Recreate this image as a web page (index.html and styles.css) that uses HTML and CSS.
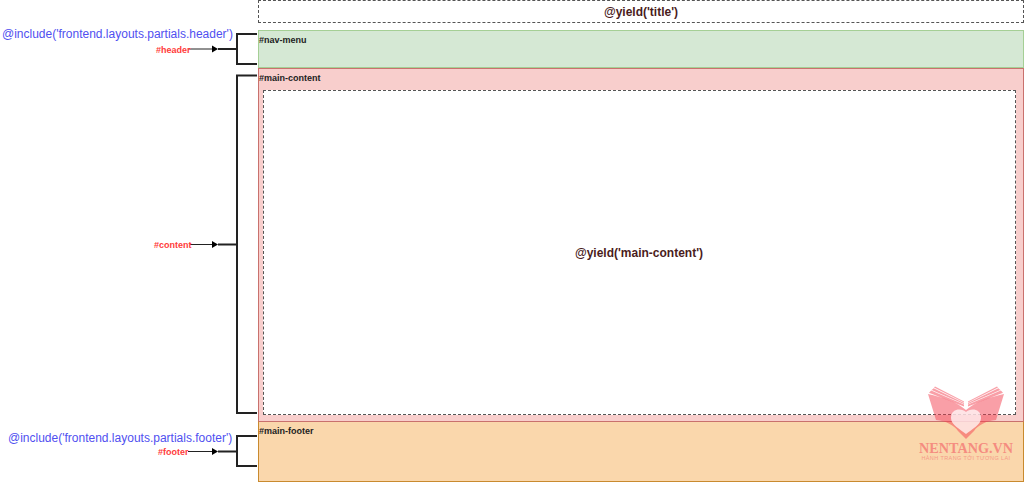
FILE: index.html
```html
<!DOCTYPE html>
<html lang="en">
<head>
<meta charset="utf-8">
<title>Layout diagram</title>
<link rel="stylesheet" href="styles.css">
</head>
<body>
<div class="canvas">
  <svg class="wires" width="1024" height="482" viewBox="0 0 1024 482">
    <g class="bracket">
      <path d="M257 34H237V64H257"/>
      <path d="M257 75.500H237V413H257"/>
      <path d="M257 436H237V466H257"/>
      <path d="M237 49H218M237 244.500H218M237 451.500H218"/>
    </g>
    <g class="thin">
      <path d="M188 49H212M190 244.500H212M188 451.500H212"/>
    </g>
    <g class="head">
      <path d="M212 45.500L218 49L212 52.500Z"/>
      <path d="M212 241L218 244.500L212 248Z"/>
      <path d="M212 448L218 451.500L212 455Z"/>
    </g>
  </svg>

  <span class="include include-header">@include('frontend.layouts.partials.header')</span>
  <span class="tag tag-header">#header</span>
  <span class="tag tag-content">#content</span>
  <span class="include include-footer">@include('frontend.layouts.partials.footer')</span>
  <span class="tag tag-footer">#footer</span>

  <section class="stack">
    <div class="title-box">@yield('title')</div>
    <div class="region nav-menu">#nav-menu</div>
    <div class="region main-content">
      <span>#main-content</span>
      <div class="yield-box">@yield('main-content')</div>
    </div>
    <div class="region main-footer">#main-footer</div>
  </section>

  <div class="logo">
    <svg class="logo-mark" width="80" height="60" viewBox="0 0 80 60">
      <g class="wing">
        <path d="M1 6.800L3.200 4.600L36 18.500L36 20.500Z"/>
        <path d="M3.700 4L5.600 2.200L36 17L36 18Z"/>
        <path d="M6 1.500L7 .5L36 15.500L36 16.500Z"/>
        <path d="M75 6.800L72.800 4.600L40 18.500L40 20.500Z"/>
        <path d="M72.300 4L70.400 2.200L40 17L40 18Z"/>
        <path d="M70 1.500L69 .5L40 15.500L40 16.500Z"/>
        <path d="M0 8C14 11 29 16 38 24C47 16 62 11 76 8L68 34C58 35 50 39 46 45L38 53L30 45C26 39 18 35 8 34Z"/>
      </g>
      <path class="heart" d="M38 26C34 22 23 22 23 32C23 39 32 43 38 48C44 43 53 39 53 32C53 22 42 22 38 26Z"/>
    </svg>
    <div class="logo-name">NENTANG.VN</div>
    <div class="logo-sub">HÀNH TRANG TỚI TƯƠNG LAI</div>
  </div>
</div>
</body>
</html>
```
FILE: styles.css
```css
html, body {
  margin: 0;
  padding: 0;
  background: #fff;
}

.canvas {
  position: relative;
  width: 1024px;
  height: 482px;
  overflow: hidden;
  font-family: "Liberation Sans", Arial, sans-serif;
}

.wires {
  position: absolute;
  left: 0;
  top: 0;
}

.bracket path {
  fill: none;
  stroke: #222;
  stroke-width: 2;
}

.thin path {
  fill: none;
  stroke: #222;
  stroke-width: 1;
}

.head path {
  fill: #000;
}

.include {
  position: absolute;
  font-size: 12px;
  line-height: 14px;
  color: #5050f0;
  white-space: nowrap;
}

.include-header {
  left: 2px;
  top: 27px;
}

.include-footer {
  left: 8px;
  top: 431px;
}

.tag {
  position: absolute;
  font-size: 9px;
  line-height: 10px;
  font-weight: 700;
  color: #ff3b3b;
  white-space: nowrap;
}

.tag-header {
  left: 156px;
  top: 45px;
}

.tag-content {
  left: 154px;
  top: 240px;
}

.tag-footer {
  left: 158px;
  top: 447px;
}

.stack {
  position: absolute;
  left: 258px;
  top: 0;
  width: 766px;
  height: 482px;
  display: flex;
  flex-direction: column;
}

.title-box {
  height: 23px;
  margin-bottom: 7px;
  box-sizing: border-box;
  border: 1px dashed #555;
  display: flex;
  align-items: center;
  justify-content: center;
  font-size: 12px;
  font-weight: 700;
  color: #4a1c1c;
}

.region {
  box-sizing: border-box;
  border: 1px solid;
  padding: 0;
  font-size: 9px;
  line-height: 14px;
  font-weight: 700;
  color: #222;
}

.nav-menu {
  height: 38px;
  padding-top: 2px;
  background: #d5e8d4;
  border-color: #a5cf95;
}

.main-content {
  height: 353px;
  padding: 2px 7px 6px 4px;
  display: flex;
  flex-direction: column;
  background: #f8cecc;
  border-color: #c9716d;
  border-bottom: none;
}

.main-content span {
  margin-left: -4px;
  height: 19px;
}

.yield-box {
  flex: 1;
  display: flex;
  align-items: center;
  justify-content: center;
  padding-right: 1px;
  background: #fff;
  border: 1px dashed #555;
  font-size: 12px;
  font-weight: 700;
  color: #4a1c1c;
}

.main-footer {
  flex: 1;
  padding-top: 2px;
  background: #fad7ac;
  border-color: #c98a2e;
  border-top-color: #c9716d;
}

.logo {
  position: absolute;
  left: 910px;
  top: 386px;
  width: 112px;
  display: flex;
  flex-direction: column;
  align-items: center;
}

.logo-mark {
  margin-left: 4px;
}

.wing path {
  fill: #f44050;
  fill-opacity: 0.5;
}

.heart {
  fill: #fff;
  fill-opacity: 0.72;
}

.logo-name {
  margin-top: -5px;
  font-family: "Liberation Serif", "Times New Roman", serif;
  font-size: 14.200px;
  line-height: 14px;
  font-weight: 700;
  color: #f58c80;
  white-space: nowrap;
}

.logo-sub {
  font-size: 5.500px;
  line-height: 7px;
  letter-spacing: 0.4px;
  color: #f59a88;
  white-space: nowrap;
}
```
